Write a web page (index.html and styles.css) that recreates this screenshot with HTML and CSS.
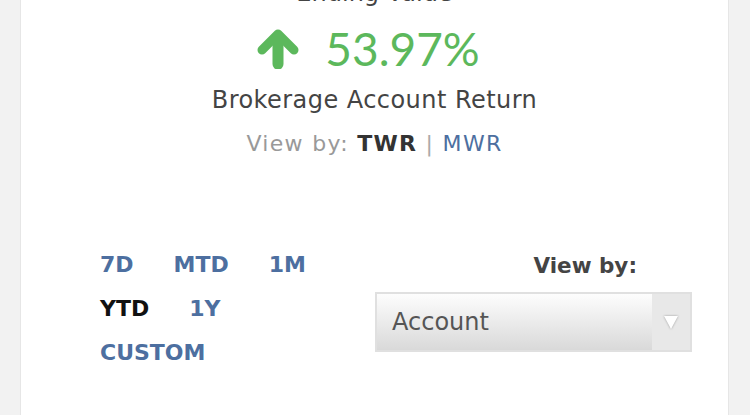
FILE: index.html
```html
<!DOCTYPE html>
<html>
<head>
<meta charset="utf-8" />
<title>Brokerage Account Return</title>
<link rel="stylesheet" href="styles.css">
</head>
<body>
<div class="card">
	<div class="summary">
		<h2 class="summary_title">Ending Value</h2>
		<div class="return_value">
			<svg class="arrow" width="42" height="40" viewBox="0 0 42 40">
				<polyline points="5,21 21,5 37,21" fill="none" stroke="#5cb85c" stroke-width="9" stroke-linecap="round" stroke-linejoin="round" />
				<line x1="21" y1="8" x2="21" y2="35" stroke="#5cb85c" stroke-width="11" stroke-linecap="round" />
			</svg>
			<span>53.97%</span>
		</div>
		<p class="return_label">Brokerage Account Return</p>
		<p class="view_by">View by: <b>TWR</b> <i>|</i> <a href="javascript:;">MWR</a></p>
	</div>
	<div class="filters">
		<ul class="periods">
			<li><a href="javascript:;">7D</a></li>
			<li><a href="javascript:;">MTD</a></li>
			<li><a href="javascript:;">1M</a></li>
			<li class="active"><a href="javascript:;">YTD</a></li>
			<li><a href="javascript:;">1Y</a></li>
			<li><a href="javascript:;">CUSTOM</a></li>
		</ul>
		<div class="group_by">
			<label>View by:</label>
			<div class="select">
				<span class="select_text">Account</span>
				<span class="select_btn"><i></i></span>
			</div>
		</div>
	</div>
</div>
</body>
</html>
```
FILE: styles.css
```css
*{ margin:0; padding:0; box-sizing:border-box;}
li{ list-style:none;}
a{ text-decoration:none;}
html, body{ height:100%;}
body{ background:#f2f2f2; font-family:"DejaVu Sans", "Open Sans", sans-serif; color:#444; overflow:hidden;}

.card{ margin:0 21px 0 20px; height:calc(100% + 22px); background:#fff; border-left:1px solid #e6e6e6; border-right:1px solid #e6e6e6;}

.summary{ text-align:center;}
.summary_title{ font-weight:400; font-size:24px; line-height:30px; margin-top:-22px; color:#444;}
.return_value{ display:flex; justify-content:center; align-items:center; gap:26px; color:#5cb85c; font-family:Lato, sans-serif; font-size:46px; line-height:50px; margin-top:16px;}
.return_value .arrow{ display:block; margin-top:-1px;}
.return_value span{ margin-right:12px;}
.return_label{ font-size:24px; line-height:28px; margin-top:12px; color:#444; letter-spacing:0.45px;}
.view_by{ font-size:22px; line-height:28px; margin-top:16px; color:#999; letter-spacing:1.3px;}
.view_by b{ color:#333;}
.view_by i{ font-style:normal; color:#aaa;}
.view_by a{ color:#4d6fa0;}

.filters{ display:flex; justify-content:space-between; padding:85px 36px 0 79px;}
.periods{ display:flex; flex-wrap:wrap; column-gap:40px; width:230px;}
.periods li{ font-size:22px; line-height:44px; font-weight:700;}
.periods a{ color:#4d6fa0;}
.periods .active a{ color:#111;}

.group_by{ display:flex; flex-direction:column; align-items:flex-end; width:317px; margin-top:8px;}
.group_by label{ font-size:21.5px; font-weight:700; color:#444; line-height:30px; margin:0 55px 11px 0;}
.select{ display:flex; width:317px; height:60px; border:2px solid #e0e0e0;}
.select_text{ flex:1; font-size:24px; line-height:56px; padding-left:15px; color:#555; background:linear-gradient(#fdfdfd, #d9d9d9);}
.select_btn{ width:38px; background:#e8e8e8; display:flex; align-items:center; justify-content:center;}
.select_btn i{ width:0; height:0; border-left:7px solid transparent; border-right:7px solid transparent; border-top:13px solid #fff; filter:drop-shadow(0 0 1px #999);}
```
